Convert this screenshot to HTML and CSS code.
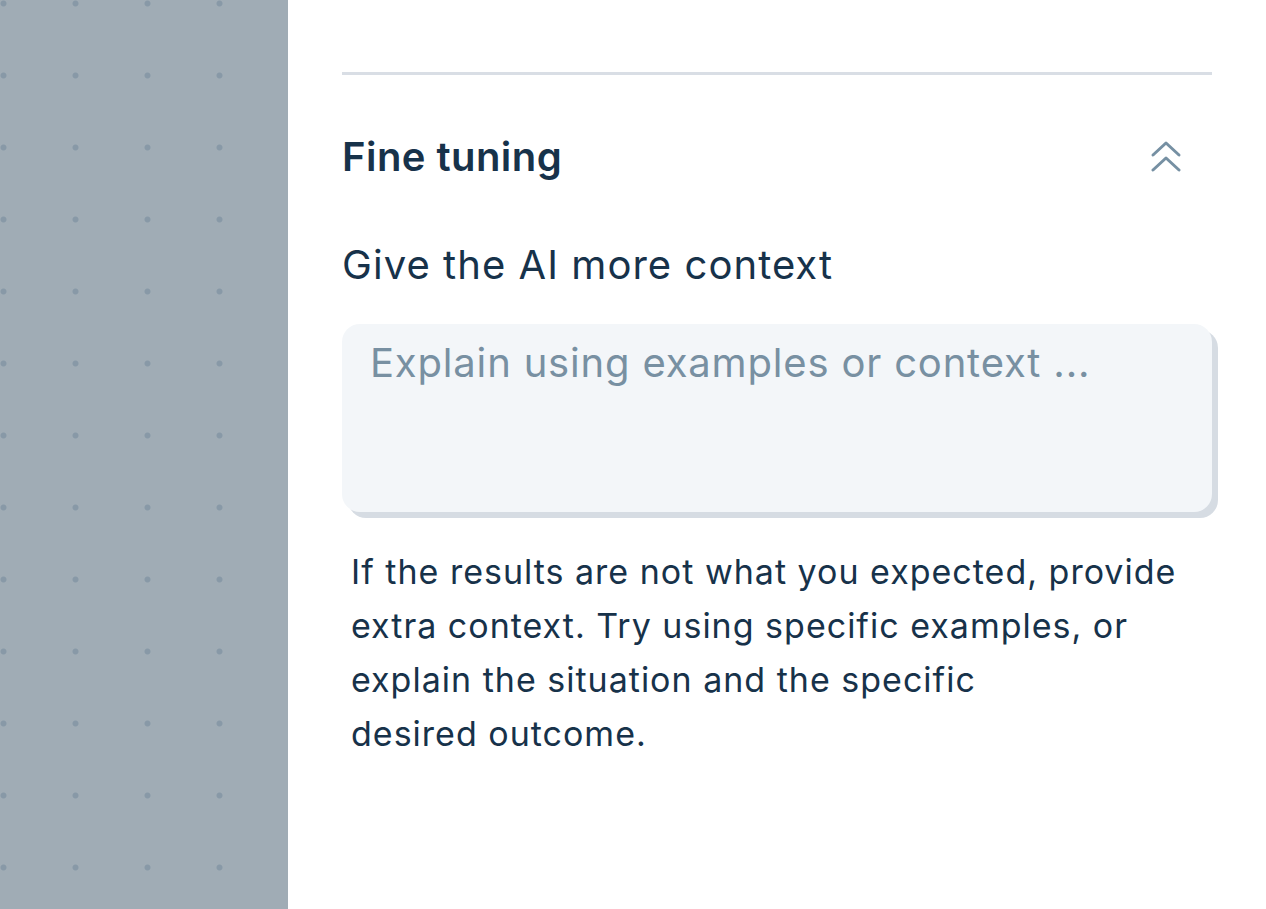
FILE: index.html
```html
<!DOCTYPE html>
<html lang="en">
<head>
<meta charset="utf-8">
<title>Fine tuning</title>
<link rel="stylesheet" href="styles.css">
</head>
<body>
<div class="layout">
  <aside class="canvas"></aside>
  <main class="panel">
    <hr class="divider">
    <div class="section-head">
      <h2 class="section-title">Fine tuning</h2>
      <button class="collapse-btn" type="button" aria-label="Collapse">
        <svg width="32" height="32" viewBox="0 0 32 32" fill="none" stroke="currentColor" stroke-width="3" stroke-linecap="round" stroke-linejoin="round">
          <polyline points="3,15 16,3 29,15"></polyline>
          <polyline points="3,30 16,18 29,30"></polyline>
        </svg>
      </button>
    </div>
    <label class="field-label" for="ctx">Give the AI more context</label>
    <textarea id="ctx" class="context-input" placeholder="Explain using examples or context ..."></textarea>
    <p class="help">If the results are not what you expected, provide extra context. Try using specific examples, or explain the situation and the specific<br>desired outcome.</p>
  </main>
</div>
</body>
</html>
```
FILE: styles.css
```css
html, body {
  margin: 0;
  padding: 0;
  height: 100%;
}
body {
  font-family: Inter, "Noto Sans", sans-serif;
  color: #163048;
  background: #ffffff;
}
.layout {
  display: flex;
  height: 909px;
  overflow: hidden;
}
.canvas {
  width: 288px;
  flex: 0 0 288px;
  background-color: #a0acb5;
  background-image: radial-gradient(circle at 3.5px 3.5px, #8899a7 0, #8899a7 2.6px, rgba(136,153,167,0) 3.4px);
  background-size: 72px 72px;
  background-position: 0 0;
}
.panel {
  flex: 1;
  padding: 72px 54px 0 54px;
  display: flex;
  flex-direction: column;
}
.divider {
  margin: 0;
  border: 0;
  height: 3px;
  background: #d9dee5;
}
.section-head {
  display: flex;
  align-items: center;
  justify-content: space-between;
  margin-top: 58px;
  height: 48px;
}
.section-title {
  margin: 0;
  font-size: 40px;
  line-height: 48px;
  font-weight: 600;
  color: #17324a;
  letter-spacing: 0.45px;
}
.collapse-btn {
  background: none;
  border: 0;
  padding: 0;
  margin-right: 30px;
  color: #7690a3;
  width: 32px;
  height: 32px;
  display: flex;
  align-items: center;
  justify-content: center;
  margin-top: -2px;
}
.field-label {
  margin-top: 60px;
  font-size: 40px;
  line-height: 48px;
  font-weight: 400;
  color: #17324a;
  letter-spacing: 1.05px;
}
.context-input {
  margin-top: 35px;
  box-sizing: border-box;
  width: 870px;
  height: 188px;
  border: 0;
  border-radius: 18px;
  background: #f3f6f9;
  box-shadow: 6px 6px 0 #d6dce3;
  padding: 15px 28px;
  font-family: Inter, "Noto Sans", sans-serif;
  font-size: 40px;
  line-height: 48px;
  letter-spacing: 0.82px;
  color: #17324a;
  resize: none;
  outline: none;
}
.context-input::placeholder {
  color: #7890a2;
  opacity: 1;
}
.help {
  margin: 33px 0 0 0;
  padding-left: 9px;
  font-size: 34px;
  line-height: 54px;
  letter-spacing: 1px;
  color: #17324a;
}
```
